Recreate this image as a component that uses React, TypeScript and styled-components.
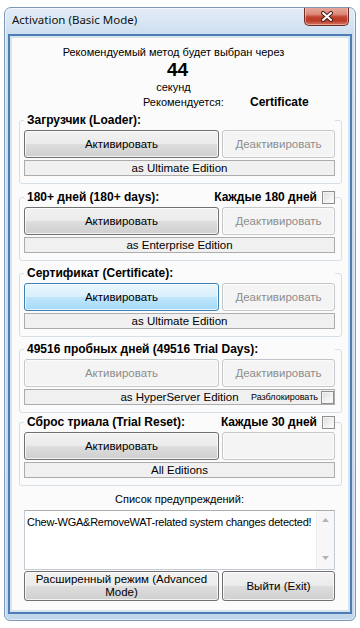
import { createGlobalStyle, css } from 'styled-components'
import styled from 'styled-components'

const GlobalStyle = createGlobalStyle`
  html, body {
    margin: 0;
    padding: 0;
    background: #ffffff;
  }
  body {
    font-family: "Liberation Sans", Arial, sans-serif;
    font-size: 11px;
    color: #000;
  }
`

type Group = {
  title: string
  extra?: string
  activeVariant: 'normal' | 'hot' | 'disabled'
  deactivateLabel: string
  edition: string
  unlock?: boolean
  gap: number
}

const groups: Group[] = [
  {
    title: 'Загрузчик (Loader):',
    activeVariant: 'normal',
    deactivateLabel: 'Деактивировать',
    edition: 'as Ultimate Edition',
    gap: 3,
  },
  {
    title: '180+ дней (180+ days):',
    extra: 'Каждые 180 дней',
    activeVariant: 'normal',
    deactivateLabel: 'Деактивировать',
    edition: 'as Enterprise Edition',
    gap: 6,
  },
  {
    title: 'Сертификат (Certificate):',
    activeVariant: 'hot',
    deactivateLabel: 'Деактивировать',
    edition: 'as Ultimate Edition',
    gap: 5,
  },
  {
    title: '49516 пробных дней (49516 Trial Days):',
    activeVariant: 'disabled',
    deactivateLabel: 'Деактивировать',
    edition: 'as HyperServer Edition',
    unlock: true,
    gap: 5,
  },
  {
    title: 'Сброс триала (Trial Reset):',
    extra: 'Каждые 30 дней',
    activeVariant: 'normal',
    deactivateLabel: '',
    edition: 'All Editions',
    gap: 2,
  },
]

const CloseIcon = () => (
  <svg width="14" height="11" viewBox="0 0 14 11">
    <path d="M3 2 L11 9 M11 2 L3 9" stroke="#4a1f18" strokeWidth="4" strokeLinecap="round" />
    <path d="M3 2 L11 9 M11 2 L3 9" stroke="#ffffff" strokeWidth="2" strokeLinecap="round" />
  </svg>
)

const Arrow = ({ up }: { up?: boolean }) => (
  <svg width="7" height="4" viewBox="0 0 7 4">
    <path d={up ? 'M0 4 L3.5 0 L7 4 Z' : 'M0 0 L3.5 4 L7 0 Z'} fill="#b4b4b4" />
  </svg>
)

const App = () => {
  return (
    <>
      <GlobalStyle />
      <Window>
        <TitleBar>
          <Title>Activation (Basic Mode)</Title>
          <CloseButton>
            <CloseIcon />
          </CloseButton>
        </TitleBar>
        <ClientFrame>
          <Client>
            <Header>
              <HeaderLine>Рекомендуемый метод будет выбран через</HeaderLine>
              <Countdown>44</Countdown>
              <HeaderLine>секунд</HeaderLine>
              <RecommendRow>
                <span>Рекомендуется:</span>
                <strong>Certificate</strong>
              </RecommendRow>
            </Header>

            {groups.map((g) => (
              <GroupBox key={g.title} $gap={g.gap}>
                <Legend>
                  <span>{g.title}</span>
                  {g.extra && (
                    <LegendExtra>
                      {g.extra}
                      <CheckBox />
                    </LegendExtra>
                  )}
                </Legend>
                <ButtonRow>
                  <WinButton $variant={g.activeVariant}>Активировать</WinButton>
                  <WinButton $variant="disabled">{g.deactivateLabel}</WinButton>
                </ButtonRow>
                <EditionBar>
                  <span />
                  <span>{g.edition}</span>
                  {g.unlock ? (
                    <Unlock>
                      Разблокировать
                      <CheckBox />
                    </Unlock>
                  ) : (
                    <span />
                  )}
                </EditionBar>
              </GroupBox>
            ))}

            <Footer>
              <WarningsTitle>Список предупреждений:</WarningsTitle>
              <Warnings>
                <WarningsText>
                  Chew-WGA&amp;RemoveWAT-related system changes detected!
                </WarningsText>
                <ScrollBar>
                  <Arrow up />
                  <Arrow />
                </ScrollBar>
              </Warnings>
              <BottomRow>
                <WinButton $variant="normal" $tall>
                  Расширенный режим (Advanced
                  <br />
                  Mode)
                </WinButton>
                <WinButton $variant="normal" $tall>
                  Выйти (Exit)
                </WinButton>
              </BottomRow>
            </Footer>
          </Client>
        </ClientFrame>
      </Window>
    </>
  )
}
export default App

const Window = styled.div`
  box-sizing: border-box;
  width: 352px;
  height: 614px;
  margin: 7px 0 0 4px;
  border: 1px solid #7f98b4;
  border-radius: 7px 7px 6px 6px;
  background: linear-gradient(180deg, #e4edf7 0, #cddff1 26px, #c2d6ec 100%);
  box-shadow: inset 0 0 0 1px rgba(255, 255, 255, 0.55);
  display: flex;
  flex-direction: column;
  overflow: hidden;
`

const TitleBar = styled.div`
  height: 26px;
  flex: none;
  display: flex;
  justify-content: space-between;
  align-items: flex-start;
  padding-left: 7px;
`

const Title = styled.div`
  font-family: "Noto Sans", "Open Sans", sans-serif;
  font-size: 11.5px;
  line-height: 16px;
  margin-top: 4px;
  color: #111;
`

const CloseButton = styled.div`
  box-sizing: border-box;
  width: 45px;
  height: 19px;
  margin: -1px 6px 0 0;
  border: 1px solid #6e2e24;
  border-top: none;
  border-radius: 0 0 5px 5px;
  background: linear-gradient(
    180deg,
    #e9ab9e 0,
    #dc8a7a 40%,
    #c2432f 55%,
    #b93a28 75%,
    #d8735f 100%
  );
  box-shadow: inset 0 0 0 1px rgba(255, 220, 210, 0.5);
  display: flex;
  align-items: center;
  justify-content: center;
`

const ClientFrame = styled.div`
  flex: 1;
  min-width: 0;
  display: flex;
  margin: 0 3px 6px;
  border: 2px solid #4b7db3;
  padding: 2px;
  background: #d6e4f2;
`

const Client = styled.div`
  flex: 1;
  min-width: 0;
  display: flex;
  flex-direction: column;
  background: #fbfbfb;
  padding: 7px 6px 0 7px;
`

const Header = styled.div`
  display: flex;
  flex-direction: column;
  align-items: center;
  padding-right: 14px;
`

const HeaderLine = styled.div`
  line-height: 15px;
`

const Countdown = styled.div`
  font-size: 19px;
  font-weight: bold;
  line-height: 20px;
  padding-left: 8px;
`

const RecommendRow = styled.div`
  align-self: stretch;
  display: grid;
  grid-template-columns: 107px auto;
  padding-left: 124px;
  line-height: 15px;

  strong {
    font-size: 12px;
    font-weight: bold;
  }
`

const GroupBox = styled.fieldset<{ $gap: number }>`
  margin: ${({ $gap }) => $gap}px 0 0;
  padding: 0 6px 7px 4px;
  border: 1px solid #d5dfe5;
  border-radius: 3px;
  min-width: 0;
  min-inline-size: 0;
`

const Legend = styled.legend`
  box-sizing: border-box;
  width: 100%;
  padding: 0 0 0 3px;
  display: flex;
  justify-content: space-between;
  align-items: center;
  height: 15px;
  line-height: 15px;
  font-size: 12px;
  font-weight: bold;
  background: #fbfbfb;
  white-space: nowrap;
`

const LegendExtra = styled.span`
  display: flex;
  align-items: center;
  gap: 5px;
  padding-left: 6px;
`

const CheckBox = styled.span`
  box-sizing: border-box;
  width: 13px;
  height: 13px;
  border: 1px solid #8e8f8f;
  background: linear-gradient(135deg, #dcdcdc 0, #f2f2f2 60%, #fdfdfd 100%);
  box-shadow: inset 0 0 0 1px #f4f4f4;
  flex: none;
`

const ButtonRow = styled.div`
  display: grid;
  grid-template-columns: 195px minmax(0, 1fr);
  gap: 3px;
  margin-top: 2px;
`

const variants = {
  normal: css`
    border-color: #707070;
    color: #000;
    background: linear-gradient(180deg, #f2f2f2 0, #ebebeb 48%, #dddddd 52%, #cfcfcf 100%);
  `,
  hot: css`
    border-color: #3c7fb1;
    color: #000;
    background: linear-gradient(180deg, #eaf6fd 0, #d9f0fc 48%, #bee6fd 52%, #a7d9f5 100%);
  `,
  disabled: css`
    border-color: #c4c7c9;
    color: #8d8d8d;
    background: #f4f4f4;
  `,
}

const WinButton = styled.div<{ $variant: 'normal' | 'hot' | 'disabled'; $tall?: boolean }>`
  box-sizing: border-box;
  height: ${({ $tall }) => ($tall ? '30px' : '28px')};
  border: 1px solid;
  border-radius: 3px;
  box-shadow: inset 0 0 0 1px rgba(255, 255, 255, 0.75);
  display: flex;
  align-items: center;
  justify-content: center;
  text-align: center;
  line-height: 13px;
  font-size: 11.5px;
  ${({ $variant }) => variants[$variant]}
`

const EditionBar = styled.div`
  box-sizing: border-box;
  height: 16px;
  margin-top: 2px;
  border: 1px solid #acacac;
  background: #f0f0f0;
  display: grid;
  grid-template-columns: 1fr auto 1fr;
  align-items: center;
  line-height: 14px;
  font-size: 11.5px;
  white-space: nowrap;
`

const Unlock = styled.span`
  justify-self: end;
  display: flex;
  align-items: center;
  gap: 3px;
  font-size: 9px;
`

const Footer = styled.div`
  display: flex;
  flex-direction: column;
  padding: 0 7px 0 5px;
`

const WarningsTitle = styled.div`
  margin-top: 6px;
  line-height: 15px;
  text-align: center;
`

const Warnings = styled.div`
  box-sizing: border-box;
  height: 60px;
  margin-top: 3px;
  border: 1px solid #c4cbd3;
  border-top-color: #abadb3;
  background: #ffffff;
  display: flex;
`

const WarningsText = styled.div`
  flex: 1;
  min-width: 0;
  padding: 4px 0 0 2px;
  line-height: 14px;
  font-size: 11px;
  letter-spacing: -0.25px;
  white-space: nowrap;
`

const ScrollBar = styled.div`
  width: 17px;
  flex: none;
  background: #f7f7f7;
  border-left: 1px solid #eeeeee;
  display: flex;
  flex-direction: column;
  justify-content: space-between;
  align-items: center;
  padding: 7px 0 9px;
`

const BottomRow = styled.div`
  display: grid;
  grid-template-columns: 195px minmax(0, 1fr);
  gap: 3px;
  margin-top: 1px;
`
